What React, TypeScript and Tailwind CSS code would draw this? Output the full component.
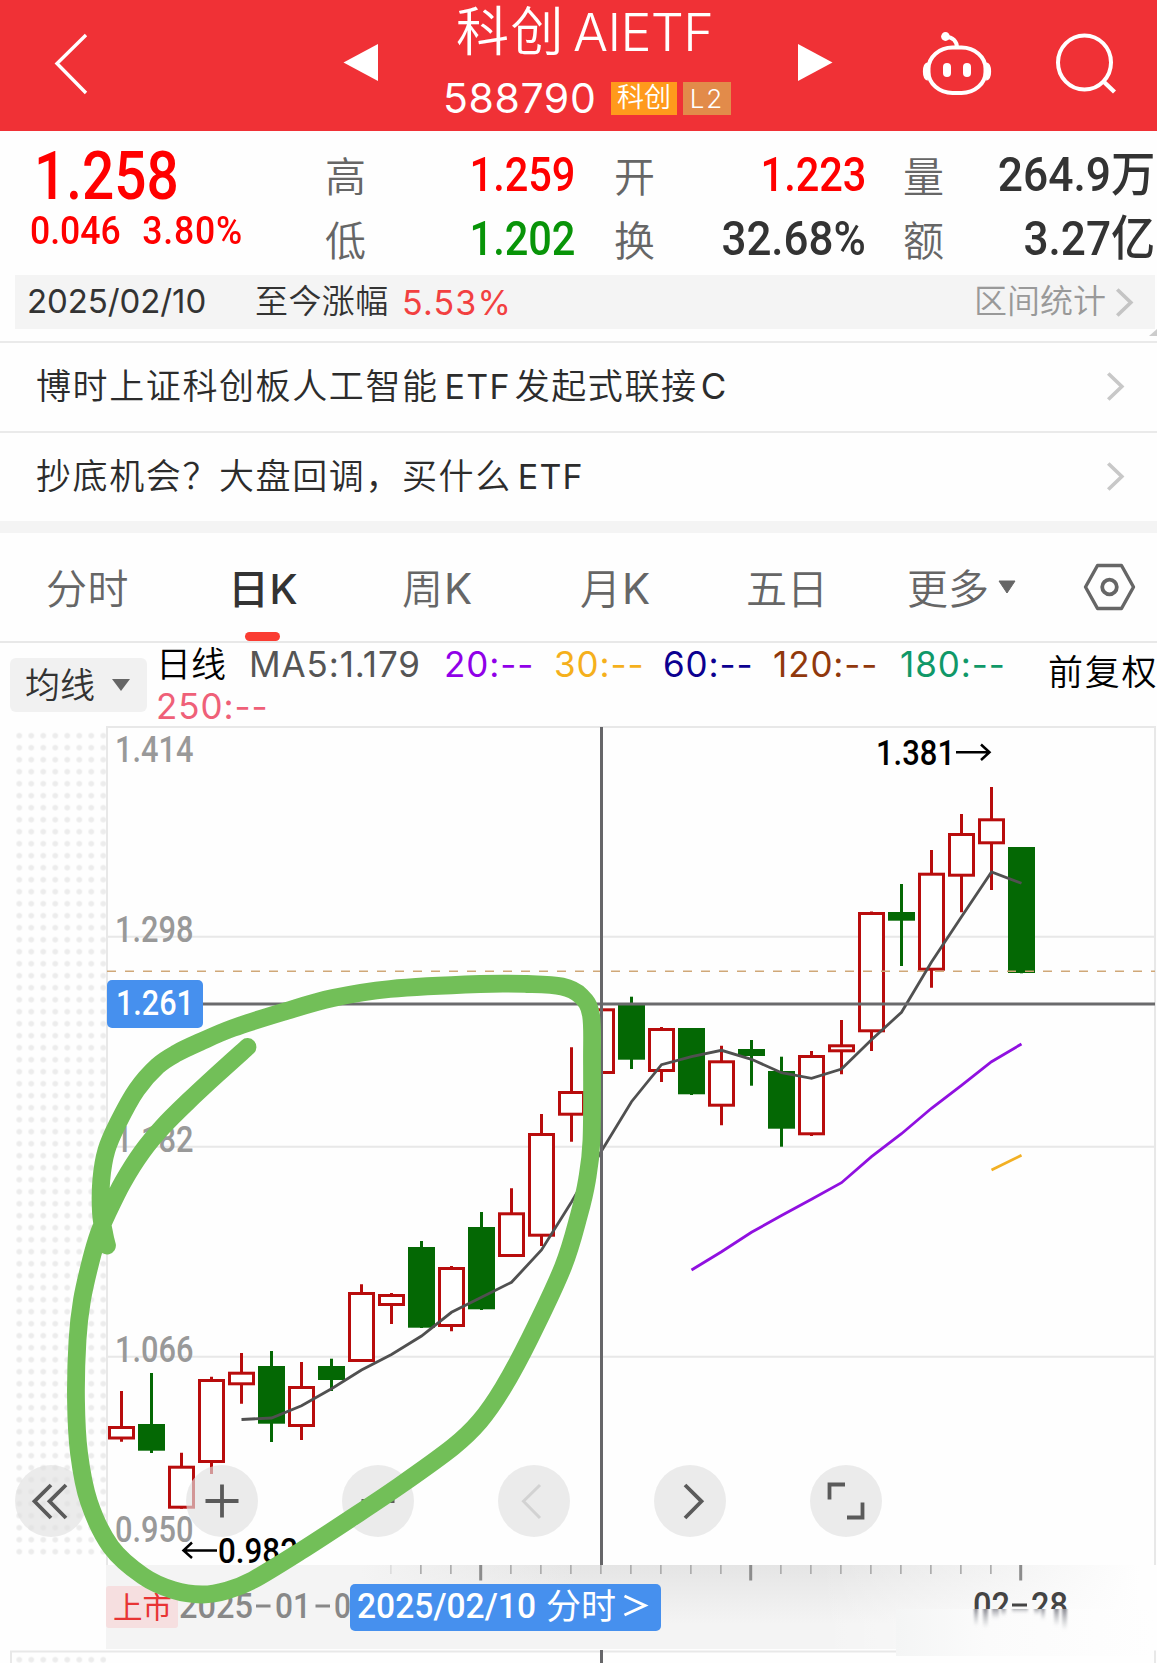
import React from 'react';

type Point = [number, number];

const FIRST_X = 121.5;
const STEP = 30;

// [open/close top, open/close bottom, wick top, wick bottom, rising]
const candles: [number, number, number, number, boolean][] = [
  [1426, 1439.5, 1391, 1441.7, true],
  [1424, 1450.7, 1373, 1453, false],
  [1465.7, 1508.7, 1452.7, 1508.7, true],
  [1379, 1463, 1376.7, 1474, true],
  [1371.7, 1385.3, 1353, 1403.7, true],
  [1366, 1423.7, 1351, 1442, false],
  [1386, 1427, 1362, 1440, true],
  [1366, 1380, 1358.7, 1391, false],
  [1292, 1362, 1284.3, 1362, true],
  [1294, 1306, 1293, 1324, true],
  [1247, 1327.7, 1241, 1328, false],
  [1267, 1327, 1266, 1331.3, true],
  [1227, 1309.3, 1212, 1310, false],
  [1212.3, 1257, 1188.3, 1257, true],
  [1133, 1236.7, 1114, 1246, true],
  [1091, 1115.7, 1047.3, 1141.7, true],
  [1008.3, 1074, 1008.3, 1074, true],
  [1005, 1059.7, 996.7, 1069, false],
  [1028, 1072, 1027, 1082, true],
  [1028, 1094.3, 1028, 1095, false],
  [1060.3, 1106.7, 1045.7, 1125.3, true],
  [1049, 1056, 1040, 1085.7, false],
  [1071, 1128.7, 1056.7, 1146.7, false],
  [1055, 1135.3, 1051, 1136, true],
  [1044.3, 1052.3, 1020, 1074.3, true],
  [912, 1032.3, 911.5, 1051, true],
  [912, 920.7, 884, 966, false],
  [872.7, 970.7, 850, 987.7, true],
  [833, 876.7, 814, 912.3, true],
  [818.3, 844.3, 787, 890, true],
  [847, 973, 847, 973.3, false],
];

const averages = [
  {
    start: 4,
    color: '#505050',
    values: [
      1419.5, 1418, 1405.7, 1388.7, 1370, 1354.5, 1336, 1312.3, 1297.3, 1282.3, 1250, 1202, 1151, 1101.7,
      1064.7, 1056.7, 1050.3, 1059.3, 1072.7, 1078.3, 1069, 1039.7, 1012.3, 962, 916.7, 872, 883.3,
    ],
  },
  {
    start: 19,
    color: '#9010e0',
    values: [1270, 1251.7, 1232.3, 1215.5, 1199.3, 1182.7, 1156.7, 1133.7, 1108.3, 1085.3, 1061.7, 1044],
  },
  { start: 29, color: '#f2b024', values: [1170, 1155.3] },
];

const marker: Point[] = [
  [247.5, 1047], [217, 1074.5], [188, 1101.5], [163, 1126.5], [142, 1152], [123, 1182], [108, 1212], [99, 1233],
  [91, 1260], [82, 1300], [77.5, 1340], [76, 1400], [79, 1453], [89, 1502], [111, 1547], [143, 1576],
  [173, 1590], [202, 1594.5], [227, 1590.5], [253, 1580], [300, 1551.5], [350, 1519], [400, 1485.5],
  [453, 1447], [480, 1421], [503, 1388], [530, 1338], [563, 1267], [579, 1215], [587, 1180], [591.5, 1140],
  [592, 1060], [591, 1015], [581, 996], [562, 986.5], [527, 984], [480, 984], [390, 989], [333, 998],
  [283, 1012], [233, 1028], [200, 1042], [177, 1053], [157.5, 1066], [136.5, 1090], [118, 1123],
  [106.5, 1150], [101.3, 1180], [101, 1213], [104.5, 1235], [107, 1245.5],
];

const prices = [
  { text: '1.414', y: 762 },
  { text: '1.298', y: 942 },
  { text: '1.182', y: 1152 },
  { text: '1.066', y: 1362 },
  { text: '0.950', y: 1542 },
];

const legend = [
  { text: 'MA5:1.179', className: 'w-[195px] text-[#555555]' },
  { text: '20:--', className: 'w-[110px] text-[#9000e8]' },
  { text: '30:--', className: 'w-[109px] text-[#f5b01c]' },
  { text: '60:--', className: 'w-[110px] text-[#0c0090]' },
  { text: '120:--', className: 'w-[127px] text-[#90380c]' },
  { text: '180:--', className: 'w-[140px] text-[#109868]' },
];

// Catmull-Rom spline through the points, written as cubic beziers
const smooth = (pts: Point[]) => {
  let d = `M${pts[0][0]} ${pts[0][1]}`;
  for (let i = 0; i < pts.length - 1; i++) {
    const p0 = pts[i - 1] || pts[i];
    const p1 = pts[i];
    const p2 = pts[i + 1];
    const p3 = pts[i + 2] || p2;
    d += ` C${p1[0] + (p2[0] - p0[0]) / 6} ${p1[1] + (p2[1] - p0[1]) / 6} ${p2[0] - (p3[0] - p1[0]) / 6} ${p2[1] - (p3[1] - p1[1]) / 6} ${p2[0]} ${p2[1]}`;
  }
  return d;
};

const Chevron = ({ className }: { className: string }) => (
  <svg viewBox="0 0 20 30" className={className} fill="none" stroke="currentColor" strokeWidth="3.8">
    <path d="M2 1.5L16 15L2 28.5" />
  </svg>
);

const Header = () => (
  <header className="flex h-[131px] bg-[#f03136] text-white">
    <div className="w-[340px] pl-[52px] pt-[32px]">
      <svg width="40" height="64" viewBox="0 0 40 64" fill="none" stroke="currentColor" strokeWidth="3.4">
        <path d="M34 3L5 31.5L34 61" />
      </svg>
    </div>
    <div className="w-[90px] pl-[3px] pt-[43px]">
      <svg width="36" height="40" viewBox="0 0 36 40" fill="currentColor">
        <path d="M0.5 19.5L35 1V38Z" />
      </svg>
    </div>
    <div className="w-[340px] whitespace-nowrap">
      <div className="flex h-[66px] items-center pl-[26px] text-[53px]">
        <span className="w-[117px] font-[350] tracking-[1.5px]">科创</span>
        <span className="text-[52px] font-[350] tracking-[-0.6px]">AIETF</span>
      </div>
      <div className="flex h-[65px] items-center pl-[13px] font-[350]">
        <span className="w-[168px] text-[41px] font-[380] tracking-[0.6px]">588790</span>
        <span className="flex h-[33px] w-[66px] items-center justify-center bg-[#ff9a1c] text-[27px]">科创</span>
        <span className="ml-[6px] flex h-[33px] w-[48px] items-center justify-center bg-[#e28b4a] text-[26px] tracking-[2px]">L2</span>
      </div>
    </div>
    <div className="w-[147px] pl-[27px] pt-[43px]">
      <svg width="36" height="40" viewBox="0 0 36 40" fill="currentColor">
        <path d="M35.5 19.5L1 1V38Z" />
      </svg>
    </div>
    <div className="w-[133px] pt-[30px]">
      <svg width="80" height="70" viewBox="917 30 80 70" fill="none" stroke="currentColor" strokeWidth="4">
        <rect x="928.500" y="47.500" width="57" height="45.500" rx="24" ry="21" />
        <path d="M945.500 37C953 37 957 41 957 48" />
        <circle cx="945.5" cy="36.500" r="4.4" fill="currentColor" stroke="none" />
        <rect x="943" y="63" width="8" height="14" rx="4" fill="currentColor" stroke="none" />
        <rect x="963" y="63" width="8" height="14" rx="4" fill="currentColor" stroke="none" />
        <path d="M928 64C923.500 65 923.500 78 928 79M986 64C990.500 65 990.500 78 986 79" strokeWidth="3.500" fill="currentColor" />
      </svg>
    </div>
    <div className="pt-[30px]">
      <svg width="70" height="66" viewBox="1050 30 70 66" fill="none" stroke="currentColor" strokeWidth="4">
        <ellipse cx="1084.500" cy="62.500" rx="26.500" ry="27" />
        <path d="M1103 81L1114.500 92" strokeWidth="4.4" />
      </svg>
    </div>
  </header>
);

interface StatProps {
  label: string;
  value: string;
  color: string;
  scale?: string;
}

const Stat = ({ label, value, color, scale = 'scale-x-[0.865]' }: StatProps) => (
  <div className="flex h-[64px] w-full items-center justify-between whitespace-nowrap">
    <span className="pt-[8px] text-[41px] font-[350] text-[#666666]">{label}</span>
    <span className={`origin-right pt-[2px] font-[Roboto,'Noto_Sans_CJK_SC',sans-serif] text-[48px] font-medium ${scale} ${color}`}>
      {value}
    </span>
  </div>
);

const Quote = () => (
  <section className="flex h-[144px] pt-[11px]">
    <div className="w-[325px] whitespace-nowrap pl-[34px] font-[Roboto,sans-serif] text-[#ff0000]">
      <div className="h-[69px] origin-left scale-x-[0.86] pt-[2px] text-[66px] font-medium leading-[66px]">1.258</div>
      <div className="-ml-[4px] flex h-[40px] origin-left scale-x-[0.9] gap-[24px] text-[39.5px] font-medium leading-[40px]">
        <span>0.046</span>
        <span className="tracking-[0.9px]">3.80%</span>
      </div>
    </div>
    <div className="w-[250px]">
      <Stat label="高" value="1.259" color="text-[#ff0000]" />
      <Stat label="低" value="1.202" color="text-[#089408]" />
    </div>
    <div className="ml-[39px] w-[252px]">
      <Stat label="开" value="1.223" color="text-[#ff0000]" />
      <Stat label="换" value="32.68%" color="text-[#333333]" scale="scale-x-[0.915]" />
    </div>
    <div className="ml-[37px] w-[252px]">
      <Stat label="量" value="264.9万" color="text-[#333333]" scale="scale-x-[0.925]" />
      <Stat label="额" value="3.27亿" color="text-[#333333]" scale="scale-x-[0.92]" />
    </div>
  </section>
);

const RangeBar = () => (
  <div className="h-[66px] pl-[15px]">
    <div className="flex h-[54px] w-[1140px] items-center whitespace-nowrap bg-[#f4f4f4] pl-[12px] text-[33px] font-[350] text-[#333333]">
      <span className="w-[228px] font-normal tracking-[-0.1px]">2025/02/10</span>
      <span className="w-[147px] tracking-[0.4px]">至今涨幅</span>
      <span className="text-[34px] font-normal tracking-[1.2px] text-[#f24040]">5.53%</span>
      <span className="ml-auto text-[#999999]">区间统计</span>
      <Chevron className="ml-[9px] mr-[20px] h-[29px] w-[20px] text-[#c4c4c4]" />
    </div>
    <svg className="ml-auto" width="8" height="8" viewBox="0 0 8 8" fill="#cccccc">
      <path d="M8 0V7H0Z" />
    </svg>
  </div>
);

const NewsRow = ({ children }: { children: React.ReactNode }) => (
  <div className="flex h-[90px] items-center whitespace-nowrap border-t-2 border-[#eaeaea] pb-[2px] pl-[36px] text-[35px] font-[350] tracking-[1.6px] text-[#2c2c2c]">
    {children}
    <Chevron className="ml-auto mr-[31px] h-[29px] w-[20px] text-[#c8c8c8]" />
  </div>
);

const Tabs = () => (
  <nav className="flex h-[110px] items-start whitespace-nowrap border-b-2 border-[#e8e8e8] pt-[26px] text-[41px] font-[350] leading-[60px] text-[#666666]">
    <span className="w-[185px] pl-[46px] tracking-[0.5px]">分时</span>
    <div className="relative w-[217px] pl-[43px] font-medium tracking-[0.5px] text-[#333333]">
      日K
      <span className="absolute left-[60px] top-[73px] h-[9px] w-[35px] rounded-full bg-[#fa3c32]" />
    </div>
    <span className="w-[178px] tracking-[1px]">周<span className="text-[42px] font-normal">K</span></span>
    <span className="w-[166px] tracking-[1px]">月<span className="text-[42px] font-normal">K</span></span>
    <span className="w-[161px]">五日</span>
    <span className="w-[91px]">更多</span>
    <svg className="mt-[21px]" width="18" height="14" viewBox="0 0 18 14" fill="currentColor">
      <path d="M1 1H17L9 13Z" stroke="currentColor" strokeLinejoin="round" />
    </svg>
    <svg className="ml-[67px] mt-[4px]" width="54" height="48" viewBox="0 0 54 48" fill="none" stroke="currentColor" strokeWidth="3.4">
      <path d="M14.500 2.500H38.500L50.500 24L38.500 45.500H14.500L2.500 24Z" strokeLinejoin="round" />
      <circle cx="26.500" cy="24" r="7.300" strokeWidth="3.8" />
    </svg>
  </nav>
);

const Legend = () => (
  <div className="flex h-[77px] whitespace-nowrap text-[35px] font-[350]">
    <div className="ml-[10px] mt-[15px] flex h-[54px] w-[137px] items-center rounded-md bg-[#f1f1f1] pl-[15px] text-[#333333]">
      <span className="w-[86px]">均线</span>
      <svg width="20" height="14" viewBox="0 0 20 14" fill="#666666">
        <path d="M1 1H19L10 13Z" />
      </svg>
    </div>
    <div className="ml-[9px] w-[892px] leading-[42px]">
      <div className="flex h-[42px]">
        <span className="w-[93px] text-[35px] text-black">日线</span>
        {legend.map((item) => (
          <span key={item.text} className={`font-normal tracking-[0.9px] ${item.className}`}>{item.text}</span>
        ))}
      </div>
      <div className="font-normal tracking-[0.9px] text-[#ef6078]">250:--</div>
    </div>
    <span className="w-[109px] overflow-hidden pt-[8px] text-[35px] leading-[42px] tracking-[1.8px] text-black">前复权</span>
  </div>
);

const Chart = () => (
  <svg className="block" width="1157" height="943" viewBox="0 720 1157 943" fontFamily="Roboto, 'Noto Sans CJK SC', sans-serif">
    <defs>
      <pattern id="dots" x="13.3" y="729.7" width="12" height="12" patternUnits="userSpaceOnUse">
        <circle cx="6" cy="6" r="2.8" fill="#ececec" />
      </pattern>
      <linearGradient id="stripShade" x1="0" y1="0" x2="0" y2="1">
        <stop offset="0" stopColor="#e5e5e5" />
        <stop offset="0.7" stopColor="#f4f4f4" />
      </linearGradient>
      <linearGradient id="stripLeft">
        <stop offset="0" stopColor="#f4f4f4" />
        <stop offset="1" stopColor="#f4f4f4" stopOpacity="0" />
      </linearGradient>
      <linearGradient id="stripRight">
        <stop offset="0" stopColor="#ffffff" stopOpacity="0" />
        <stop offset="0.95" stopColor="#fefefe" />
      </linearGradient>
      <linearGradient id="fadeOut">
        <stop offset="0" stopColor="#f4f5f5" />
        <stop offset="0.35" stopColor="#fbfbfb" />
        <stop offset="1" stopColor="#fefefe" />
      </linearGradient>
      <linearGradient id="smear" x1="0" y1="0" x2="0" y2="1">
        <stop offset="0" stopColor="#555560" stopOpacity="0.8" />
        <stop offset="1" stopColor="#8a9098" stopOpacity="0" />
      </linearGradient>
      <filter id="soft" x="-20%" y="-20%" width="140%" height="140%">
        <feGaussianBlur stdDeviation="1.2 1.5" />
      </filter>
      <clipPath id="lowerStrip">
        <rect x="896" y="1609" width="258" height="47" />
      </clipPath>
    </defs>

    <rect x="13.3" y="729.7" width="93" height="828" fill="url(#dots)" />
    <rect x="13.3" y="1653.7" width="93" height="10" fill="url(#dots)" />

    {/* frame and grid */}
    <g stroke="#e8e8e8" strokeWidth="2" fill="none">
      <path d="M107 1565V727H1155V1565" />
      <path d="M107 936.7H1155M107 1146.7H1155M107 1356.7H1155" />
      <path d="M11 1663V1651.500H1155V1663" />
    </g>

    {/* time axis */}
    <rect x="106" y="1565" width="1051" height="84" fill="url(#stripShade)" />
    <rect x="106" y="1565" width="254" height="84" fill="#f4f4f4" />
    <rect x="360" y="1565" width="220" height="84" fill="url(#stripLeft)" />
    <rect x="820" y="1565" width="337" height="84" fill="url(#stripRight)" />
    {Array.from({ length: 22 }, (_, i) => {
      const major = i === 3 || i === 12 || i === 21;
      return (
        <rect
          key={i}
          x={390 + i * 30 - (major ? 0.8 : 0)}
          y="1565"
          width={major ? 3 : 1.7}
          height={major ? 15.500 : 9}
          fill={major ? '#8c8c8c' : i === 0 ? '#dddddd' : '#adadad'}
        />
      );
    })}

    {prices.map((p) => (
      <text key={p.text} x="115" y={p.y} fontSize="36" fontWeight="500" fill="#999999" textLength="78.500" lengthAdjust="spacingAndGlyphs">
        {p.text}
      </text>
    ))}

    {candles.map(([top, bottom, high, low, rising], i) => {
      const x = FIRST_X + i * STEP;
      return rising ? (
        <g key={i} stroke="#b80c0c" strokeWidth="3" fill="none">
          <path d={`M${x} ${high}V${top + 1}M${x} ${bottom - 1}V${low}`} />
          <rect x={x - 12} y={top + 1.5} width="24" height={bottom - top - 3} fill="#ffffff" />
        </g>
      ) : (
        <g key={i} fill="#046804">
          <rect x={x - 1.5} y={high} width="3" height={low - high} />
          <rect x={x - 13.5} y={top} width="27" height={bottom - top} />
        </g>
      );
    })}

    <path d="M107 971.3H1155" stroke="#d0a878" strokeWidth="1.5" strokeDasharray="9 9" />

    {averages.map((line) => (
      <polyline
        key={line.color}
        points={line.values.map((y, i) => `${FIRST_X + (line.start + i) * STEP},${y}`).join(' ')}
        fill="none"
        stroke={line.color}
        strokeWidth="2.8"
      />
    ))}

    {/* crosshair */}
    <path d="M107 1004H1155" stroke="#6a6a6c" strokeWidth="3" />
    <path d="M601.500 727V1565M601.500 1650V1663" stroke="#666669" strokeWidth="3" />

    <g fontWeight="500" fontSize="35.500" fill="#000000">
      <text x="876" y="765" textLength="79" lengthAdjust="spacingAndGlyphs">1.381</text>
      <text x="218" y="1562.7" textLength="80" lengthAdjust="spacingAndGlyphs">0.982</text>
    </g>
    <g stroke="#000000" strokeWidth="2.5" fill="none">
      <path d="M956 752.300H989M981 744.500L989.500 752.300L981 760" />
      <path d="M217 1550.500H184M192 1542.500L183.500 1550.500L192 1558" />
    </g>

    <rect x="107" y="980" width="96" height="48" rx="5" fill="#4690ee" />
    <text x="116" y="1015" fontSize="35.500" fontWeight="500" fill="#ffffff" textLength="78" lengthAdjust="spacingAndGlyphs">1.261</text>

    {/* date labels */}
    <rect x="106" y="1586" width="72" height="42" rx="3" fill="#f6dfe0" />
    <text x="113" y="1618" fontSize="29.500" fill="#e83434">上市</text>
    <g fontSize="34.500" fill="#888888">
      <text x="179" y="1617.7" textLength="74" lengthAdjust="spacingAndGlyphs" fontWeight="500">2025</text>
      <text x="275" y="1617.7" textLength="36" lengthAdjust="spacingAndGlyphs" fontWeight="500">01</text>
      <text x="334" y="1617.7" textLength="17" lengthAdjust="spacingAndGlyphs" fontWeight="500">0</text>
      <path d="M256 1606H270.500M315.500 1606H330" stroke="#888888" strokeWidth="3" />
    </g>
    <rect x="350" y="1584" width="311" height="47" rx="5" fill="#4690ee" />
    <g fill="#ffffff" fontSize="35">
      <text x="357" y="1617.7" textLength="179" lengthAdjust="spacingAndGlyphs" fontWeight="500">2025/02/10</text>
      <text x="546" y="1618.500" textLength="70" fontSize="35">分时</text>
      <path d="M624.500 1596L645 1605.500L624.500 1615" fill="none" stroke="#ffffff" strokeWidth="3" />
    </g>

    {/* last date, its lower half dissolves */}
    <g fontSize="34.500" fontWeight="500" fill="#444444">
      <text x="973" y="1617" textLength="37" lengthAdjust="spacingAndGlyphs">02</text>
      <text x="1031" y="1617" textLength="37" lengthAdjust="spacingAndGlyphs">28</text>
      <path d="M1012 1605H1027" stroke="#444444" strokeWidth="3" />
    </g>
    <rect x="896" y="1609" width="258" height="47" fill="url(#fadeOut)" />
    <g clipPath="url(#lowerStrip)">
      <g filter="url(#soft)">
        {[
          [974, 4, 20], [983, 5, 22], [992, 7, 13], [1001, 5, 10], [1012, 16, 7], [1034, 6, 9], [1041, 4, 14], [1054, 5, 20], [1062, 5, 24],
        ].map(([x, w, h]) => (
          <rect key={x} x={x} y="1606" width={w} height={h} fill="url(#smear)" />
        ))}
      </g>
    </g>

    {/* chart controls */}
    <g fill="#e0e0e0" fillOpacity="0.65">
      {[51, 222, 378, 534, 690, 846].map((cx) => (
        <circle key={cx} cx={cx} cy="1501" r="36" />
      ))}
    </g>
    <g fill="none" stroke="#5a5a5a" strokeWidth="3.8">
      <path d="M51 1485L34.500 1501.300L51 1518M66 1485L49.500 1501.300L66 1518" />
      <path d="M205.500 1501H238.500M222 1484.500V1517.500" />
      <path d="M361.500 1501H394.500" />
      <path d="M540 1485L523.500 1501.300L540 1518" stroke="#d2d2d2" strokeWidth="3" />
      <path d="M685 1485L701.500 1501.300L685 1518" />
      <path d="M829.500 1499.500V1484.500H845M847 1517.500H862.500V1502.500" />
    </g>

    <path d={smooth(marker)} fill="none" stroke="#72bf58" strokeWidth="17.800" strokeLinecap="round" strokeLinejoin="round" />
  </svg>
);

const App = () => {
  return (
    <div className="h-[1663px] w-[1157px] overflow-hidden bg-[#fefefe] font-[Inter,'Noto_Sans_CJK_SC',sans-serif]">
      <Header />
      <Quote />
      <RangeBar />
      <NewsRow>
        博时上证科创板人工智能
        <span className="ml-[6px] mr-[4px] text-[34px] font-normal tracking-[1.2px]">ETF</span>
        发起式联接
        <span className="ml-[3px] font-normal">C</span>
      </NewsRow>
      <NewsRow>
        抄底机会？大盘回调，买什么
        <span className="ml-[6px] text-[34px] font-normal tracking-[1.2px]">ETF</span>
      </NewsRow>
      <div className="h-[12px] bg-[#f4f4f4]" />
      <Tabs />
      <Legend />
      <Chart />
    </div>
  );
};

export default App;
